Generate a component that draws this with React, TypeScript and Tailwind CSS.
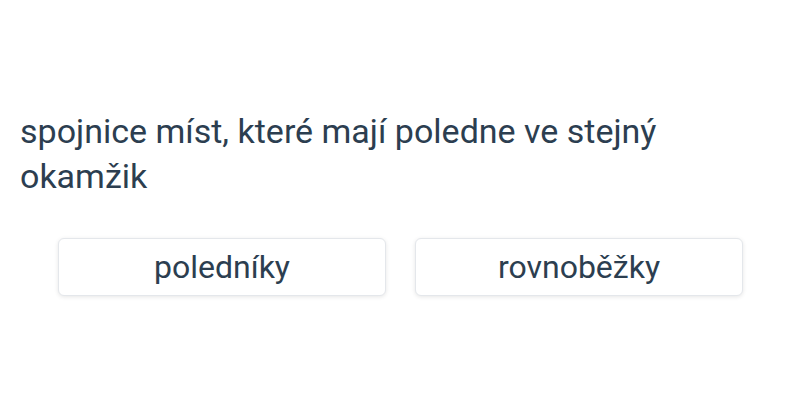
export default function App() {
  return (
    <div
      className="w-[800px] h-[400px] bg-white text-[#2c3e50]"
      style={{ fontFamily: 'Roboto, "Noto Sans", sans-serif' }}
    >
      <div className="px-5 pt-[109px]">
        <p className="text-[34px] leading-[45px]">
          spojnice míst, které mají poledne ve stejný okamžik
        </p>
      </div>
      <div className="grid grid-cols-2 gap-[29px] pl-[58px] pr-[57px] mt-[39px]">
        <button className="h-[58px] rounded-md border border-[#e4e7eb] bg-white text-[32px] text-[#2c3e50] shadow-[0_1px_4px_rgba(0,0,0,0.1)]">
          poledníky
        </button>
        <button className="h-[58px] rounded-md border border-[#e4e7eb] bg-white text-[32px] text-[#2c3e50] shadow-[0_1px_4px_rgba(0,0,0,0.1)]">
          rovnoběžky
        </button>
      </div>
    </div>
  );
}
